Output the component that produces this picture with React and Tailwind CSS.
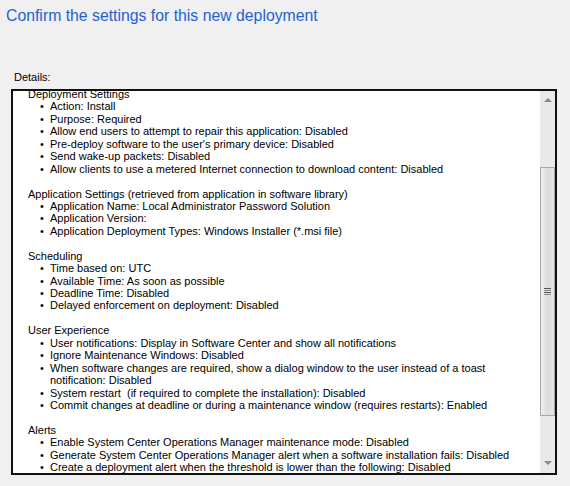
import React from 'react';

const sections = [
    {
        title: 'Deployment Settings',
        items: [
            'Action: Install',
            'Purpose: Required',
            'Allow end users to attempt to repair this application: Disabled',
            "Pre-deploy software to the user's primary device: Disabled",
            'Send wake-up packets: Disabled',
            'Allow clients to use a metered Internet connection to download content: Disabled',
        ],
    },
    {
        title: 'Application Settings (retrieved from application in software library)',
        items: [
            'Application Name: Local Administrator Password Solution',
            'Application Version:',
            'Application Deployment Types: Windows Installer (*.msi file)',
        ],
    },
    {
        title: 'Scheduling',
        items: [
            'Time based on: UTC',
            'Available Time: As soon as possible',
            'Deadline Time: Disabled',
            'Delayed enforcement on deployment: Disabled',
        ],
    },
    {
        title: 'User Experience',
        items: [
            'User notifications: Display in Software Center and show all notifications',
            'Ignore Maintenance Windows: Disabled',
            'When software changes are required, show a dialog window to the user instead of a toast notification: Disabled',
            'System restart  (if required to complete the installation): Disabled',
            'Commit changes at deadline or during a maintenance window (requires restarts): Enabled',
        ],
    },
    {
        title: 'Alerts',
        items: [
            'Enable System Center Operations Manager maintenance mode: Disabled',
            'Generate System Center Operations Manager alert when a software installation fails: Disabled',
            'Create a deployment alert when the threshold is lower than the following: Disabled',
        ],
    },
];

const ScrollBar = () => (
    <div className="w-[15px] bg-[#e9e9e9] flex flex-col items-center">
        <div className="h-[17px] flex items-center justify-center">
            <div className="w-0 h-0 border-l-[4px] border-r-[4px] border-b-[4px] border-l-transparent border-r-transparent border-b-[#8a8a8a]"></div>
        </div>
        <div className="h-[59px]"></div>
        <div className="w-[15px] h-[249px] border border-[#a8a8a8] bg-gradient-to-r from-[#f0f0f0] via-[#dcdcdc] to-[#e6e6e6] flex flex-col items-center justify-center gap-[1px]">
            <div className="w-[7px] h-[1px] bg-[#555]"></div>
            <div className="w-[7px] h-[1px] bg-[#888]"></div>
            <div className="w-[7px] h-[1px] bg-[#555]"></div>
            <div className="w-[7px] h-[1px] bg-[#888]"></div>
        </div>
        <div className="flex-1"></div>
        <div className="h-[20px] flex items-center justify-center">
            <div className="w-0 h-0 border-l-[4px] border-r-[4px] border-t-[4px] border-l-transparent border-r-transparent border-t-[#8a8a8a]"></div>
        </div>
    </div>
);

const App = () => {
    return (
        <div className="w-[570px] h-[486px] bg-[#f0f0f0] overflow-hidden font-['Liberation_Sans',Arial,sans-serif]">
            <h1 className="pt-[6px] pl-[6px] text-[15.8px] leading-[20px] text-[#1f62d4]">
                Confirm the settings for this new deployment
            </h1>

            <div className="pl-[14px] mt-[45px] text-[11px] leading-[13px] text-black">Details:</div>

            <div className="ml-[11px] mt-[5px] w-[546px] h-[386px] border-2 border-[#111] bg-white flex">
                <div className="flex-1 overflow-hidden text-[11px] leading-[12.44px] text-black">
                    {/* list is scrolled down a few pixels */}
                    <div className="-mt-[3px]">
                        {sections.map((s, i) => (
                            <div key={i} className={i > 0 ? 'mt-[12.44px]' : ''}>
                                <div className="pl-[15px]">{s.title}</div>
                                <ul>
                                    {s.items.map((item, j) => (
                                        <li key={j} className="flex pl-[27px]">
                                            <span className="w-[10px] shrink-0">•</span>
                                            <span className="whitespace-pre-wrap">{item}</span>
                                        </li>
                                    ))}
                                </ul>
                            </div>
                        ))}
                    </div>
                </div>
                <ScrollBar />
            </div>
        </div>
    );
};

export default App;
